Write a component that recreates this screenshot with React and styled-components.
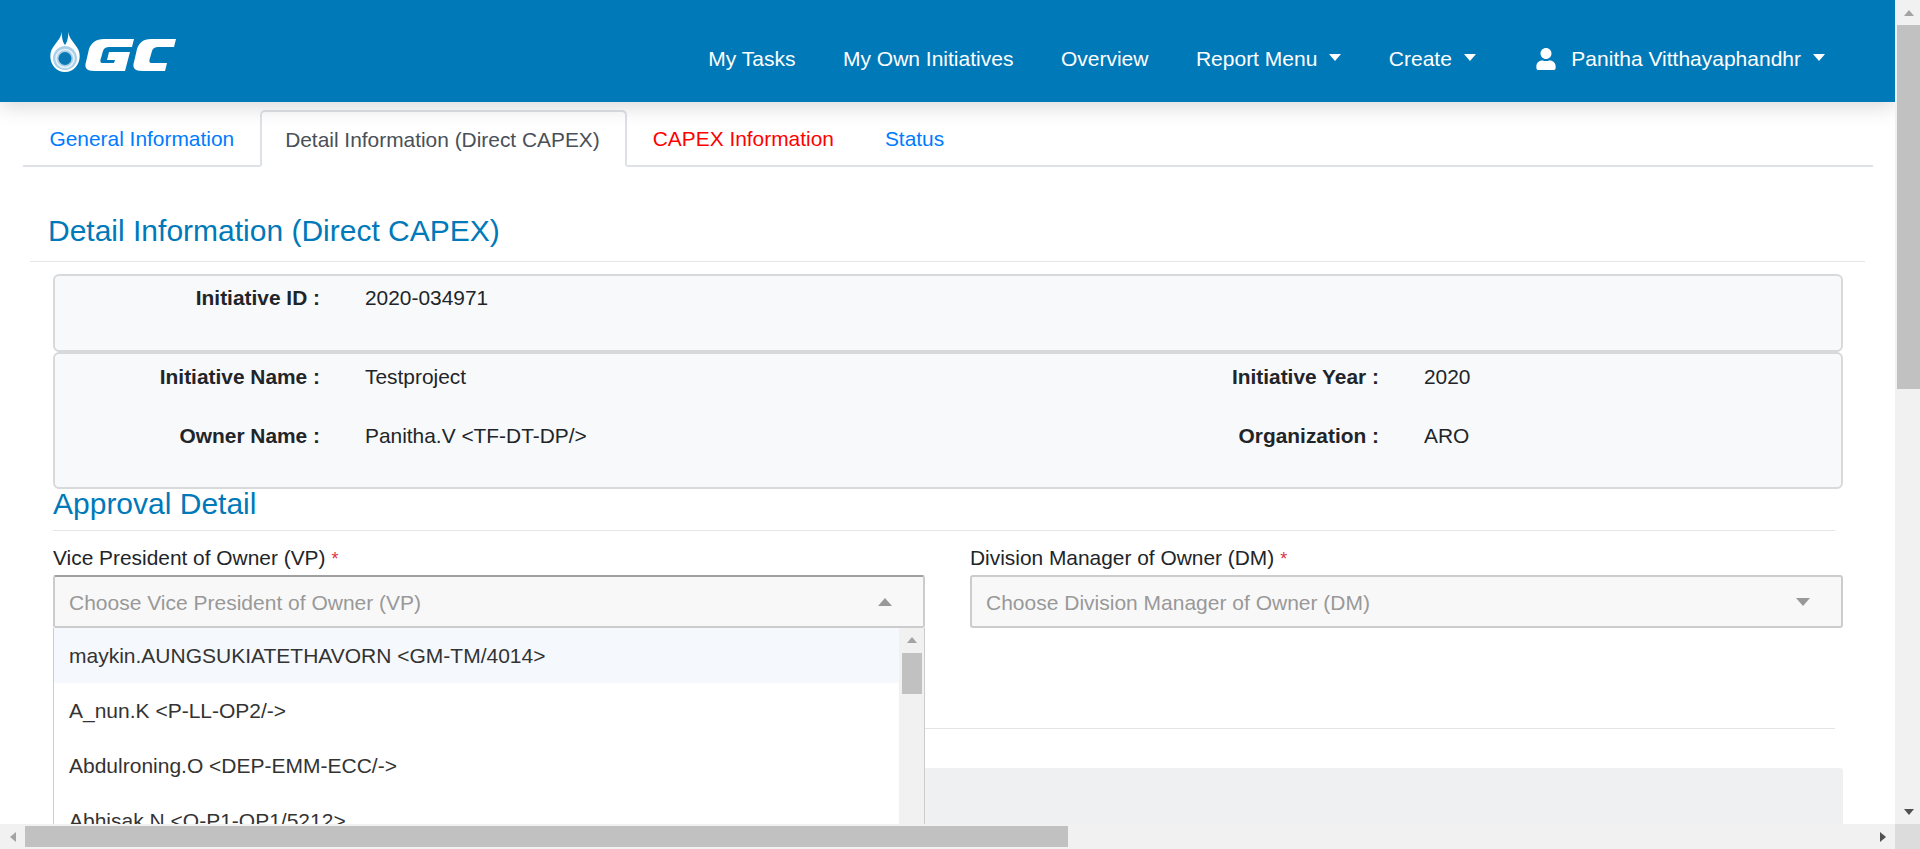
import React from "react";
import styled, { createGlobalStyle } from "styled-components";
import { FaUser } from "react-icons/fa";

const Global = createGlobalStyle`
  html, body { margin: 0; padding: 0; height: 100%; overflow: hidden; background: #fff; }
  body { font-family: "Liberation Sans", Arial, sans-serif; font-size: 20.9px; color: #212529; }
  * { box-sizing: border-box; }
`;

const Frame = styled.div`
  display: grid;
  grid-template-columns: 1895px 25px;
  grid-template-rows: 824px 25px;
  width: 1920px;
  height: 849px;
  overflow: hidden;
`;
const Main = styled.div`
  display: flex;
  flex-direction: column;
  overflow: hidden;
  background: #fff;
`;
const Header = styled.header`
  flex: none;
  display: flex;
  align-items: center;
  height: 102px;
  padding: 0 70px 0 49px;
  background: #0079b9;
  box-shadow: 0 4px 20px rgba(0, 0, 0, 0.16);
  position: relative;
  z-index: 2;
`;
const Logo = styled.svg`
  display: block;
  width: 128px;
  height: 44px;
  margin-top: 1px;
  filter: blur(0.5px);
`;
const Nav = styled.nav`
  margin-left: auto;
  display: flex;
  align-items: center;
  gap: 47.5px;
  color: #fff;
  font-size: 21px;
  margin-top: 16px;
`;
const NavItem = styled.span`
  display: flex;
  align-items: center;
  white-space: nowrap;
`;
const Caret = styled.i`
  display: block;
  width: 0;
  height: 0;
  margin-left: 12px;
  margin-top: -3px;
  border-top: 7px solid currentColor;
  border-left: 6.5px solid transparent;
  border-right: 6.5px solid transparent;
`;
const UserIcon = styled(FaUser)`
  font-size: 22px;
  margin-right: 14px;
  margin-left: 12px;
`;
const Tabs = styled.div`
  flex: none;
  display: flex;
  align-items: flex-end;
  margin: 8px 0 0 23px;
  padding-left: 1px;
  width: 1850px;
  height: 57px;
  border-bottom: 2px solid #dee2e6;
  font-size: 20.9px;
`;
const Tab = styled.div`
  height: ${(p) => (p.$active ? "57px" : "55px")};
  margin-bottom: ${(p) => (p.$active ? "-2px" : "0")};
  padding: 3px ${(p) => (p.$active ? "25.5px" : "23.5px")} 0 23.5px;
  display: flex;
  align-items: center;
  white-space: nowrap;
  color: ${(p) => p.$color || "#007bff"};
  background: #fff;
  border: 2px solid ${(p) => (p.$active ? "#dee2e6" : "transparent")};
  border-bottom-color: ${(p) => (p.$active ? "#fff" : "transparent")};
  border-radius: 5px 5px 0 0;
`;
const PageTitle = styled.h2`
  flex: none;
  margin: 47px 0 0 30px;
  width: 1835px;
  padding: 0 0 13px 18px;
  font-weight: 400;
  font-size: 30px;
  line-height: 34px;
  color: #0079b9;
  border-bottom: 1px solid #e3e5e7;
`;
const Body = styled.div`
  flex: 1;
  display: flex;
  flex-direction: column;
  margin: 12px 0 0 53px;
  width: 1790px;
  min-height: 0;
`;
const Card = styled.section`
  flex: none;
  display: grid;
  grid-template-columns: 310px 750px 309px 1fr;
  grid-auto-rows: 30px;
  row-gap: 29px;
  align-items: center;
  padding: ${(p) => p.$pad || "7px 0 36px"};
  background: #f8f9fa;
  border: 2px solid #d8d9db;
  border-radius: 6px;
  line-height: 30px;
`;
const Key = styled.div`
  padding-right: 45px;
  text-align: right;
  font-weight: 700;
  white-space: nowrap;
`;
const Val = styled.div`
  white-space: nowrap;
`;
const SectionTitle = styled.h3`
  flex: none;
  margin: 0;
  width: 1782px;
  padding-bottom: 11px;
  font-weight: 400;
  font-size: 30px;
  line-height: 30px;
  color: #0079b9;
  border-bottom: 1px solid #e3e5e7;
`;
const Fields = styled.div`
  flex: none;
  display: grid;
  grid-template-columns: 872px 873px;
  column-gap: 45px;
  margin-top: 14px;
`;
const Field = styled.div`
  position: relative;
`;
const FieldLabel = styled.label`
  display: block;
  height: 30px;
  line-height: 26px;
  white-space: nowrap;
`;
const Req = styled.span`
  color: #dc3545;
  margin-left: 6px;
  font-size: 18px;
`;
const Select = styled.div`
  display: flex;
  align-items: center;
  justify-content: space-between;
  height: 53px;
  padding: 2px 31px 0 14px;
  background: #f8f8f8;
  color: #999;
  font-size: 21px;
  border: 2px solid #ccc;
  border-top-color: ${(p) => (p.$open ? "#a0a0a0" : "#ccc")};
  border-radius: 3px;
  white-space: nowrap;
`;
const Arrow = styled.i`
  display: block;
  width: 0;
  height: 0;
  margin-top: -2px;
  border-left: 7.5px solid transparent;
  border-right: 7.5px solid transparent;
  ${(p) => (p.$up ? "border-bottom: 8px solid #999;" : "border-top: 8px solid #999;")}
`;
const Dropdown = styled.div`
  position: absolute;
  top: 83px;
  left: 0;
  width: 872px;
  height: 240px;
  display: flex;
  background: #fff;
  border: 1px solid #ccc;
  border-width: 0 1px 1px;
  z-index: 3;
`;
const Options = styled.div`
  flex: 1;
`;
const Option = styled.div`
  display: flex;
  align-items: center;
  height: 55px;
  padding-left: 15px;
  color: #333;
  font-size: 21px;
  white-space: nowrap;
  background: ${(p) => (p.$hi ? "#f5f9fd" : "#fff")};
`;
const MiniBar = styled.div`
  flex: none;
  width: 25px;
  background: #f1f1f1;
  display: flex;
  flex-direction: column;
  align-items: center;
`;
const MiniArrow = styled.i`
  display: block;
  width: 0;
  height: 0;
  margin: 9px 0 10px;
  border-left: 5px solid transparent;
  border-right: 5px solid transparent;
  border-bottom: 6px solid #a3a3a3;
`;
const MiniThumb = styled.div`
  width: 20px;
  height: 41px;
  background: #c1c1c1;
`;
const Divider = styled.hr`
  flex: none;
  margin: 100px 0 0;
  width: 1782px;
  border: 0;
  border-top: 1px solid #e3e5e7;
`;
const Panel = styled.div`
  flex: 1;
  margin-top: 39px;
  background: #eff0f2;
  border-radius: 3px 3px 0 0;
`;
const VBar = styled.div`
  grid-column: 2;
  grid-row: 1;
  display: flex;
  flex-direction: column;
  background: #f1f1f1;
`;
const VButton = styled.div`
  flex: none;
  height: 25px;
  display: flex;
  align-items: center;
  justify-content: center;
  padding-left: 2px;
`;
const VTri = styled.i`
  display: block;
  width: 0;
  height: 0;
  border-left: 5.5px solid transparent;
  border-right: 5.5px solid transparent;
  ${(p) => (p.$up ? "border-bottom: 6px solid #a3a3a3;" : "border-top: 6px solid #505050;")}
`;
const VTrack = styled.div`
  flex: 1;
  padding-left: 2px;
`;
const VThumb = styled.div`
  height: 364px;
  background: #c1c1c1;
`;
const HBar = styled.div`
  grid-column: 1;
  grid-row: 2;
  display: flex;
  align-items: center;
  background: #f1f1f1;
`;
const HButton = styled.div`
  flex: none;
  width: 25px;
  height: 25px;
  display: flex;
  align-items: center;
  justify-content: center;
`;
const HTri = styled.i`
  display: block;
  width: 0;
  height: 0;
  border-top: 5.5px solid transparent;
  border-bottom: 5.5px solid transparent;
  ${(p) => (p.$left ? "border-right: 6px solid #a3a3a3;" : "border-left: 6px solid #505050;")}
`;
const HTrack = styled.div`
  flex: 1;
  height: 21px;
`;
const HThumb = styled.div`
  width: 1043px;
  height: 21px;
  background: #c1c1c1;
`;
const Corner = styled.div`
  grid-column: 2;
  grid-row: 2;
  background: #dcdcdc;
`;

const GcLogo = () => (
  <Logo viewBox="0 0 128 44" aria-label="GC">
    <circle cx="16" cy="28" r="13" fill="#a9d0e8" />
    <path
      d="M12.5 1 C13 8 6 13 2.5 20 C-1.5 30 5 42 16 42 C27 42 33.5 30 29.5 20 C26 13 19 8 19.5 1 C19 8 18.5 12 16 15 C13.5 12 13 8 12.5 1 Z M16 16 C9 16 4 22 4 28.5 C4 35 9.500 40 16 40 C22.500 40 28 35 28 28.5 C28 22 23 16 16 16 Z"
      fill="#fff"
      fillRule="evenodd"
    />
    <circle cx="16" cy="28.500" r="9" fill="none" stroke="#e6f2f9" strokeWidth="1.600" />
    <circle cx="16" cy="28.500" r="6.500" fill="#0b78b6" />
    <path
      d="M85 9 L55 9 C47 9 42 13 40 19 L37 32 C35 38 38 41 45 41 L76 41 L81 22 L60 22 L58 30 L66 30 L65 33 L54 33 C51 33 51 31 52 28 L54 21 C55 18 57 17 60 17 L83 17 Z"
      fill="#fff"
    />
    <path
      d="M127 9 L102 9 C94 9 90 13 88 19 L85 32 C83 38 86 41 93 41 L116 41 L118 33 L103 33 C100 33 100 31 101 28 L103 21 C104 18 106 17 109 17 L125 17 Z"
      fill="#fff"
    />
  </Logo>
);

export default function App() {
  return (
    <>
      <Global />
      <Frame>
        <Main>
          <Header>
            <GcLogo />
            <Nav>
              <NavItem>My Tasks</NavItem>
              <NavItem>My Own Initiatives</NavItem>
              <NavItem>Overview</NavItem>
              <NavItem>
                Report Menu
                <Caret />
              </NavItem>
              <NavItem>
                Create
                <Caret />
              </NavItem>
              <NavItem>
                <UserIcon />
                Panitha Vitthayaphandhr
                <Caret />
              </NavItem>
            </Nav>
          </Header>
          <Tabs>
            <Tab>General Information</Tab>
            <Tab $active $color="#495057">
              Detail Information (Direct CAPEX)
            </Tab>
            <Tab $color="#ff0000">CAPEX Information</Tab>
            <Tab>Status</Tab>
          </Tabs>
          <PageTitle>Detail Information (Direct CAPEX)</PageTitle>
          <Body>
            <Card $pad="7px 0 37px">
              <Key>Initiative ID :</Key>
              <Val>2020-034971</Val>
            </Card>
            <Card $pad="8px 0 36px">
              <Key>Initiative Name :</Key>
              <Val>Testproject</Val>
              <Key>Initiative Year :</Key>
              <Val>2020</Val>
              <Key>Owner Name :</Key>
              <Val>Panitha.V &lt;TF-DT-DP/&gt;</Val>
              <Key>Organization :</Key>
              <Val>ARO</Val>
            </Card>
            <SectionTitle>Approval Detail</SectionTitle>
            <Fields>
              <Field>
                <FieldLabel>
                  Vice President of Owner (VP)<Req>*</Req>
                </FieldLabel>
                <Select $open>
                  Choose Vice President of Owner (VP)
                  <Arrow $up />
                </Select>
                <Dropdown>
                  <Options>
                    <Option $hi>maykin.AUNGSUKIATETHAVORN &lt;GM-TM/4014&gt;</Option>
                    <Option>A_nun.K &lt;P-LL-OP2/-&gt;</Option>
                    <Option>Abdulroning.O &lt;DEP-EMM-ECC/-&gt;</Option>
                    <Option>Abhisak.N &lt;O-P1-OP1/5212&gt;</Option>
                  </Options>
                  <MiniBar>
                    <MiniArrow />
                    <MiniThumb />
                  </MiniBar>
                </Dropdown>
              </Field>
              <Field>
                <FieldLabel>
                  Division Manager of Owner (DM)<Req>*</Req>
                </FieldLabel>
                <Select>
                  Choose Division Manager of Owner (DM)
                  <Arrow />
                </Select>
              </Field>
            </Fields>
            <Divider />
            <Panel />
          </Body>
        </Main>
        <VBar>
          <VButton>
            <VTri $up />
          </VButton>
          <VTrack>
            <VThumb />
          </VTrack>
          <VButton>
            <VTri />
          </VButton>
        </VBar>
        <HBar>
          <HButton>
            <HTri $left />
          </HButton>
          <HTrack>
            <HThumb />
          </HTrack>
          <HButton>
            <HTri />
          </HButton>
        </HBar>
        <Corner />
      </Frame>
    </>
  );
}
